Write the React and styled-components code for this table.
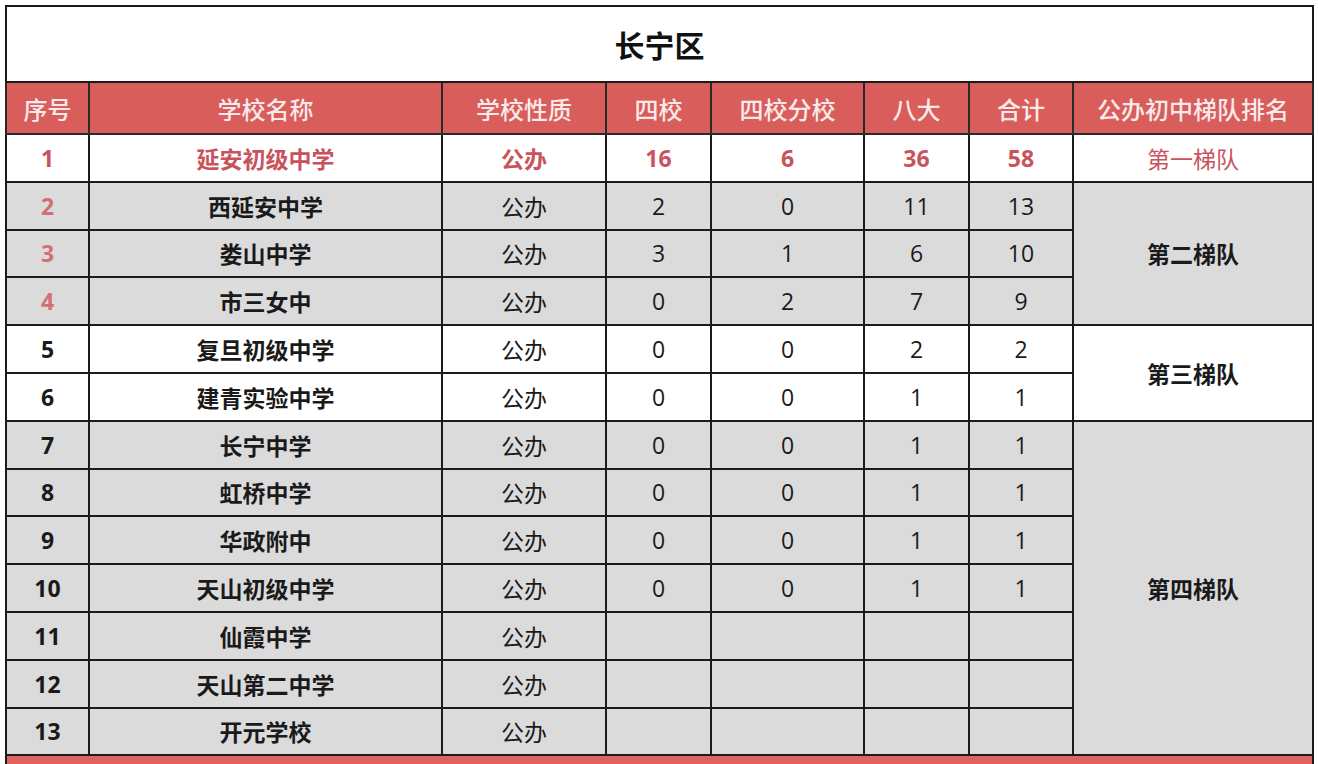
import React from 'react';
import styled, { createGlobalStyle } from 'styled-components';

const GlobalStyle = createGlobalStyle`
  html, body {
    margin: 0;
    padding: 0;
    background: #ffffff;
    overflow: hidden;
  }
  body {
    font-family: "Noto Sans CJK SC", "Open Sans", sans-serif;
  }
`;

const Page = styled.div`
  padding: 5px 5px 0 5px;
`;

const Table = styled.table`
  width: 1308px;
  border-collapse: collapse;
  table-layout: fixed;
  border: 2px solid #1b1b1b;
  font-family: "Noto Sans CJK SC", sans-serif;
`;

const TitleCell = styled.th`
  height: 74px;
  background: #ffffff;
  font-size: 30px;
  font-weight: 700;
  color: #111;
  text-align: center;
  padding: 0;
  border: 2px solid #1b1b1b;
`;

const HeadCell = styled.th`
  height: 50px;
  background: #d95d5b;
  color: #f8eaea;
  font-size: 24px;
  font-weight: 500;
  text-align: center;
  padding: 0;
  border: 2px solid #2a2a2a;
`;

const Row = styled.tr`
  background: ${(p) => (p.$grey ? '#dbdbdc' : '#ffffff')};
`;

const Cell = styled.td`
  height: 45.8px;
  padding: 0;
  text-align: center;
  border: 2px solid #1b1b1b;
  font-size: ${(p) => (p.$num ? '23px' : '23px')};
  font-family: ${(p) =>
    p.$num ? '"Open Sans", "Noto Sans CJK SC", sans-serif' : '"Noto Sans CJK SC", sans-serif'};
  font-weight: ${(p) => (p.$bold ? 700 : 400)};
  color: ${(p) => p.$color || '#1a1a1a'};
`;

const Footer = styled.td`
  height: 30px;
  background: #df6361;
  border: 2px solid #1b1b1b;
`;

const cols = [83, 353, 164, 105, 153, 105, 104, 240];
const heads = ['序号', '学校名称', '学校性质', '四校', '四校分校', '八大', '合计', '公办初中梯队排名'];

const RED = '#c9535c';
const PINK = '#d46e76';

const schools = [
  { n: 1, name: '延安初级中学', a: 16, b: 6, c: 36, d: 58 },
  { n: 2, name: '西延安中学', a: 2, b: 0, c: 11, d: 13 },
  { n: 3, name: '娄山中学', a: 3, b: 1, c: 6, d: 10 },
  { n: 4, name: '市三女中', a: 0, b: 2, c: 7, d: 9 },
  { n: 5, name: '复旦初级中学', a: 0, b: 0, c: 2, d: 2 },
  { n: 6, name: '建青实验中学', a: 0, b: 0, c: 1, d: 1 },
  { n: 7, name: '长宁中学', a: 0, b: 0, c: 1, d: 1 },
  { n: 8, name: '虹桥中学', a: 0, b: 0, c: 1, d: 1 },
  { n: 9, name: '华政附中', a: 0, b: 0, c: 1, d: 1 },
  { n: 10, name: '天山初级中学', a: 0, b: 0, c: 1, d: 1 },
  { n: 11, name: '仙霞中学' },
  { n: 12, name: '天山第二中学' },
  { n: 13, name: '开元学校' },
];

const tiers = {
  1: { label: '第一梯队', span: 1 },
  2: { label: '第二梯队', span: 3 },
  5: { label: '第三梯队', span: 2 },
  7: { label: '第四梯队', span: 7 },
};

const isGrey = (n) => (n >= 2 && n <= 4) || n >= 7;

export default function App() {
  return (
    <Page>
      <GlobalStyle />
      <Table>
        <colgroup>
          {cols.map((w, i) => (
            <col key={i} style={{ width: w }} />
          ))}
        </colgroup>
        <thead>
          <tr>
            <TitleCell colSpan={8}>长宁区</TitleCell>
          </tr>
          <tr>
            {heads.map((h) => (
              <HeadCell key={h}>{h}</HeadCell>
            ))}
          </tr>
        </thead>
        <tbody>
          {schools.map((s) => {
            const first = s.n === 1;
            const tier = tiers[s.n];
            const col = first ? RED : undefined;
            const seqColor = first ? RED : s.n <= 4 ? PINK : undefined;
            return (
              <Row key={s.n} $grey={isGrey(s.n)}>
                <Cell $num $bold $color={seqColor}>{s.n}</Cell>
                <Cell $bold $color={col}>{s.name}</Cell>
                <Cell $bold={first} $color={col}>公办</Cell>
                <Cell $num $bold={first} $color={col}>{s.a}</Cell>
                <Cell $num $bold={first} $color={col}>{s.b}</Cell>
                <Cell $num $bold={first} $color={col}>{s.c}</Cell>
                <Cell $num $bold={first} $color={col}>{s.d}</Cell>
                {tier && (
                  <Cell rowSpan={tier.span} $bold={!first} $color={col}>
                    {tier.label}
                  </Cell>
                )}
              </Row>
            );
          })}
          <tr>
            <Footer colSpan={8} />
          </tr>
        </tbody>
      </Table>
    </Page>
  );
}
